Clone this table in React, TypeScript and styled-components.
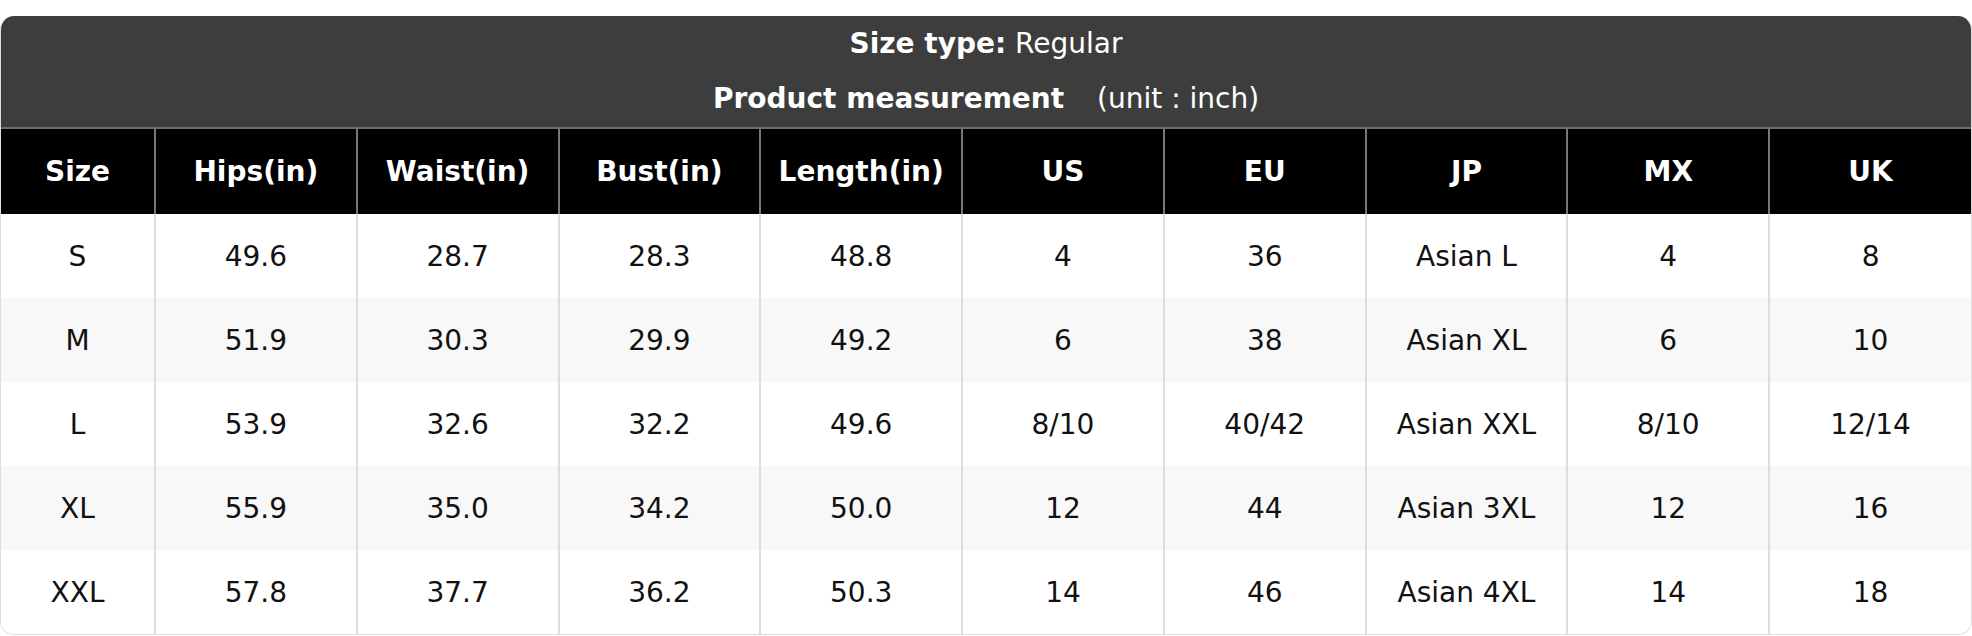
import React from "react";
import styled, { createGlobalStyle } from "styled-components";

const GlobalStyle = createGlobalStyle`
  body {
    margin: 0;
    background: #ffffff;
    font-family: "DejaVu Sans", "Liberation Sans", sans-serif;
  }
`;

const Page = styled.div`
  padding-top: 16px;
`;

const Card = styled.div`
  border: 1px solid #dddddd;
  border-top: none;
  border-radius: 14px;
  overflow: hidden;
  background: #ffffff;
`;

const Banner = styled.div`
  background: #3d3d3d;
  color: #ffffff;
  text-align: center;
  border-bottom: 2px solid #6e6e6e;
`;

const BannerLine = styled.div<{ $h: number }>`
  height: ${(p) => p.$h}px;
  line-height: ${(p) => p.$h}px;
  font-size: 28px;
`;

const Strong = styled.b`
  font-weight: 700;
`;

const Unit = styled.span`
  margin-left: 24px;
`;

const Table = styled.table`
  width: 100%;
  border-collapse: collapse;
  table-layout: fixed;
`;

const Th = styled.th`
  height: 85px;
  padding: 0;
  background: #000000;
  color: #ffffff;
  font-size: 28px;
  font-weight: 700;
  text-align: center;
  border-left: 2px solid #777777;
  &:first-child {
    border-left: none;
  }
`;

const Row = styled.tr<{ $striped: boolean }>`
  background: ${(p) => (p.$striped ? "#f8f8f8" : "#ffffff")};
`;

const Td = styled.td`
  height: 84px;
  padding: 0;
  font-size: 28px;
  color: #111111;
  text-align: center;
  border-left: 2px solid #dddddd;
  &:first-child {
    border-left: none;
  }
`;

const columns = ["Size", "Hips(in)", "Waist(in)", "Bust(in)", "Length(in)", "US", "EU", "JP", "MX", "UK"];

const rows = [
  ["S", "49.6", "28.7", "28.3", "48.8", "4", "36", "Asian L", "4", "8"],
  ["M", "51.9", "30.3", "29.9", "49.2", "6", "38", "Asian XL", "6", "10"],
  ["L", "53.9", "32.6", "32.2", "49.6", "8/10", "40/42", "Asian XXL", "8/10", "12/14"],
  ["XL", "55.9", "35.0", "34.2", "50.0", "12", "44", "Asian 3XL", "12", "16"],
  ["XXL", "57.8", "37.7", "36.2", "50.3", "14", "46", "Asian 4XL", "14", "18"],
];

export default function App() {
  return (
    <Page>
      <GlobalStyle />
      <Card>
        <Banner>
          <BannerLine $h={55}>
            <Strong>Size type:</Strong> Regular
          </BannerLine>
          <BannerLine $h={56}>
            <Strong>Product measurement</Strong> <Unit>(unit : inch)</Unit>
          </BannerLine>
        </Banner>
        <Table>
          <colgroup>
            <col style={{ width: 154 }} />
            {columns.slice(1).map((c) => (
              <col key={c} />
            ))}
          </colgroup>
          <thead>
            <tr>
              {columns.map((c) => (
                <Th key={c}>{c}</Th>
              ))}
            </tr>
          </thead>
          <tbody>
            {rows.map((r, i) => (
              <Row key={r[0]} $striped={i % 2 === 1}>
                {r.map((cell, j) => (
                  <Td key={j}>{cell}</Td>
                ))}
              </Row>
            ))}
          </tbody>
        </Table>
      </Card>
    </Page>
  );
}
